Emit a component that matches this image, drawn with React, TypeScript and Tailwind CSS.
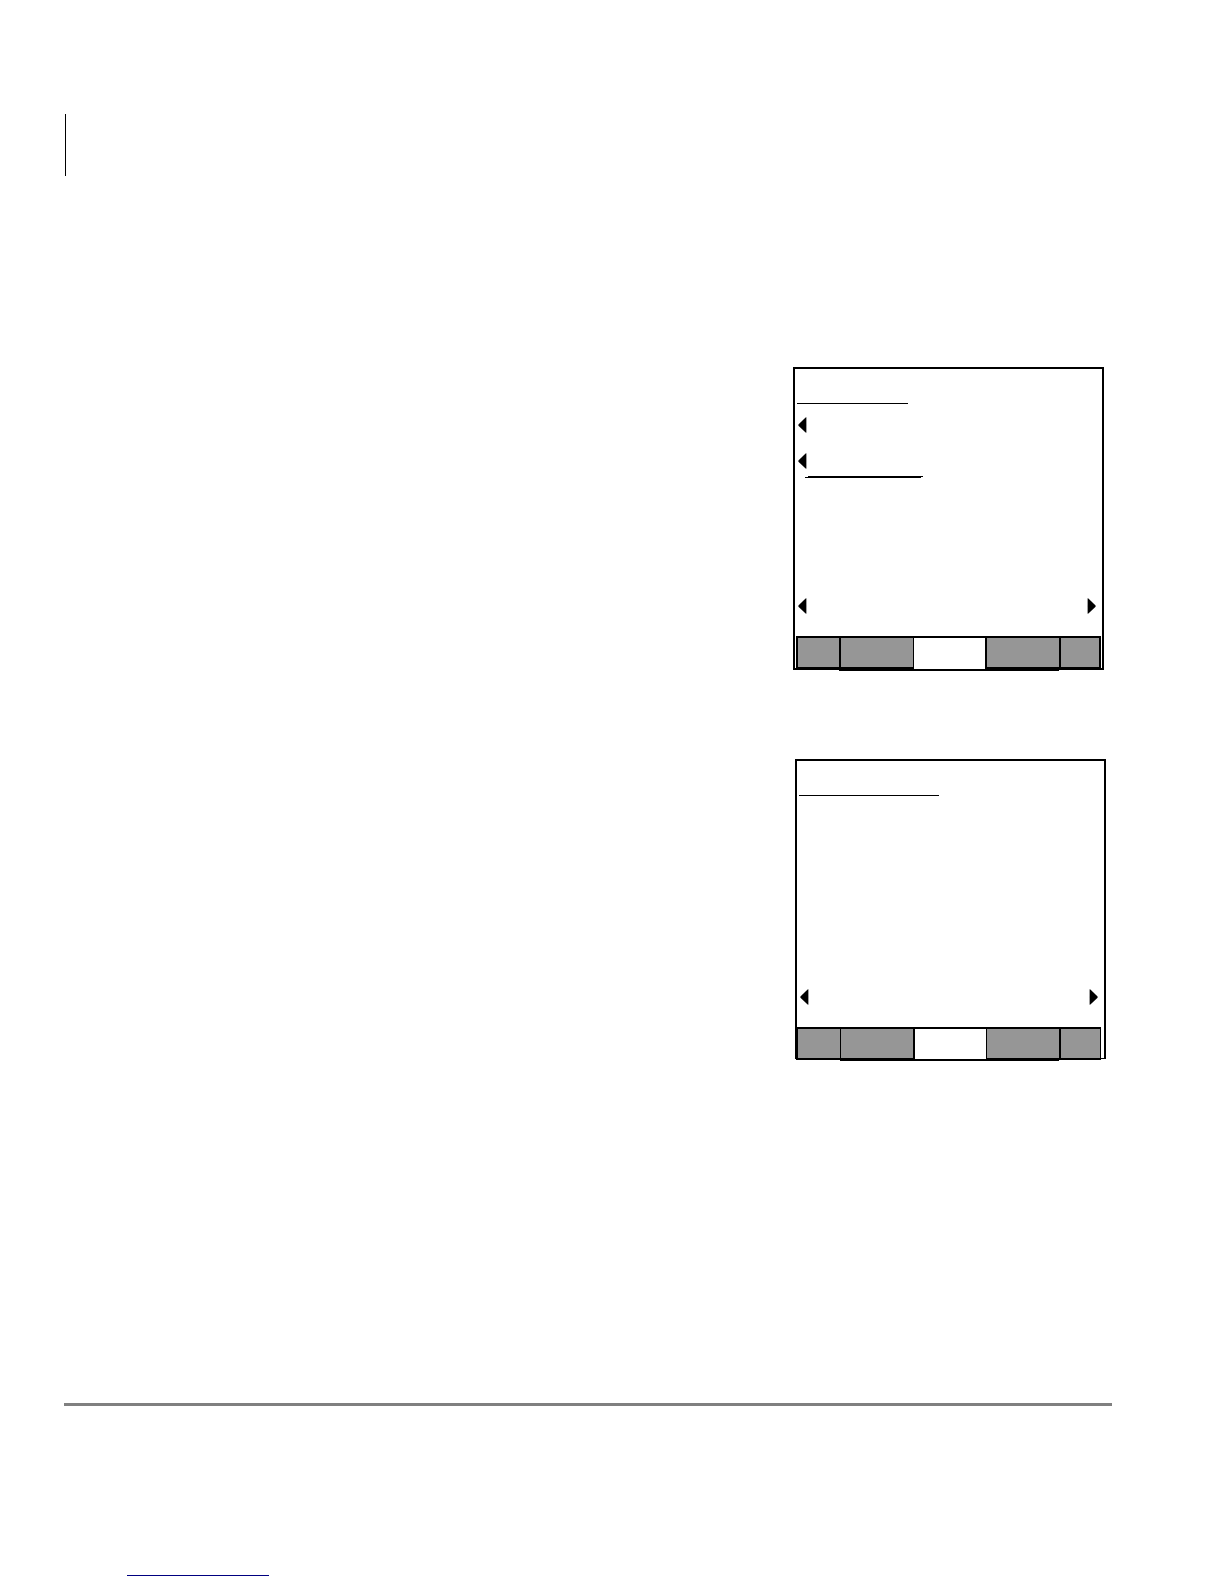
import React from "react";

function Arrow({ side, label }: { side: "left" | "right"; label: string }) {
  return (
    <button type="button" aria-label={label} className="block h-4 w-[9px]">
      <svg viewBox="0 0 9 16" className="block h-4 w-[9px]" aria-hidden="true">
        <path d={side === "left" ? "M8.4 0.3V15.7L7.6 15.4L0.4 8.8V7.4L7.6 0.6Z" : "M0.6 0.3V15.7L1.4 15.4L8.6 8.8V7.4L1.4 0.6Z"} fill="#000" />
      </svg>
    </button>
  );
}

function PageArrows() {
  return (
    <div className="flex justify-between pr-[6px] pl-[3px]">
      <Arrow side="left" label="Previous" />
      <Arrow side="right" label="Next" />
    </div>
  );
}

function SoftKeys({ keys, className }: { keys: string[]; className: string }) {
  return (
    <nav aria-label="Soft keys" className={`grid items-start ${className}`}>
      {keys.map((key, i) => (
        <button
          key={i}
          type="button"
          aria-label={`Soft key ${i + 1}`}
          className={`block border-t-2 ${key}`}
        />
      ))}
    </nav>
  );
}

const firstKeys = [
  "h-[33px] border-black border-l-2 border-b-2 bg-[#969696]",
  "h-[35px] border-black border-l-2 border-r border-b-4 bg-[#969696]",
  "h-[35px] border-black border-b-2 bg-white",
  "h-[35px] border-black border-l-2 border-b-4 bg-[#969696]",
  "h-[33px] border-black border-x-2 border-b-2 bg-[#969696]",
];

const secondKeys = [
  "h-[33px] border-black border-l-2 border-b-2 bg-[#969696]",
  "h-[34px] border-black border-l border-r-2 border-b-[3px] bg-[#969696]",
  "h-[34px] border-black border-b-2 bg-white",
  "h-[34px] border-black border-l border-b-[3px] bg-[#969696]",
  "h-[33px] border-black border-l-2 border-r border-b-2 bg-[#969696]",
];

export default function App() {
  return (
    <div className="flex min-h-screen flex-col bg-white pt-[114px] pr-28 pb-2 pl-16">
      <header className="ml-px h-[62px] border-l border-black" />

      <main className="mt-[191px] flex flex-col items-end">
        <section aria-label="First display" className="mr-2 w-[311px] border-2 border-black">
          <div className="ml-[2px] h-[35px] w-[111px] border-b border-black" />
          <div className="mt-[13px] flex flex-col gap-5 pl-[3px]">
            <Arrow side="left" label="Select first line" />
            <Arrow side="left" label="Select second line" />
          </div>
          <div className="mt-[7px] mb-[120px] ml-[10px]">
            <div className="ml-[3px] h-px w-[115px] bg-black" />
            <div className="h-px w-[116px] bg-black" />
          </div>
          <PageArrows />
          <SoftKeys
            keys={firstKeys}
            className="mx-px mt-[22px] -mb-[3px] grid-cols-[43fr_75fr_71fr_74fr_42fr]"
          />
        </section>

        <section
          aria-label="Second display"
          className="mt-[89px] mr-[6px] w-[311px] border-2 border-b border-black"
        >
          <div className="mb-[193px] ml-[2px] h-[35px] w-[140px] border-b border-black" />
          <PageArrows />
          <SoftKeys
            keys={secondKeys}
            className="mt-[22px] mr-[3px] -mb-[3px] -ml-px grid-cols-[44fr_75fr_71fr_73fr_42fr]"
          />
        </section>
      </main>

      <footer>
        <hr className="mt-[344px] border-t-[3px] border-[#808080]" />
        <a href="#" aria-label="Page link" className="mt-[150px] ml-[63px] flex h-5 w-[142px] items-end">
          <span className="h-px w-full bg-[#000080]" />
        </a>
      </footer>
    </div>
  );
}
